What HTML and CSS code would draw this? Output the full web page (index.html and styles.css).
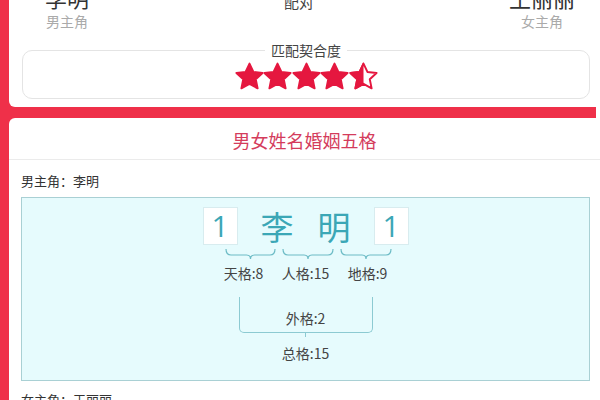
FILE: index.html
```html
<!DOCTYPE html>
<html lang="zh">
<head>
<meta charset="utf-8">
<link rel="stylesheet" href="styles.css">
</head>
<body>
<div class="frame">
  <div class="top-band">
    <div class="top">
      <div class="couple">
        <div class="who">
          <div class="name">李明</div>
          <div class="role">男主角</div>
        </div>
        <div class="pair">配对</div>
        <div class="who">
          <div class="name">王丽丽</div>
          <div class="role">女主角</div>
        </div>
      </div>
      <fieldset class="match">
        <legend>匹配契合度</legend>
        <div class="stars">
          <svg class="star" viewBox="2.2 2.2 19.6 19.6"><path d="M12 2.6l2.85 6.1 6.65.75-4.95 4.55 1.35 6.6L12 17.3l-5.9 3.3 1.35-6.6L2.5 9.45l6.65-.75z"/></svg>
          <svg class="star" viewBox="2.2 2.2 19.6 19.6"><path d="M12 2.6l2.85 6.1 6.65.75-4.95 4.55 1.35 6.6L12 17.3l-5.9 3.3 1.35-6.6L2.5 9.45l6.65-.75z"/></svg>
          <svg class="star" viewBox="2.2 2.2 19.6 19.6"><path d="M12 2.6l2.85 6.1 6.65.75-4.95 4.55 1.35 6.6L12 17.3l-5.9 3.3 1.35-6.6L2.5 9.45l6.65-.75z"/></svg>
          <svg class="star" viewBox="2.2 2.2 19.6 19.6"><path d="M12 2.6l2.85 6.1 6.65.75-4.95 4.55 1.35 6.6L12 17.3l-5.9 3.3 1.35-6.6L2.5 9.45l6.65-.75z"/></svg>
          <svg class="star half" viewBox="2.2 2.2 19.6 19.6">
            <defs><clipPath id="lefthalf"><rect x="0" y="0" width="12" height="24"/></clipPath></defs>
            <path class="outline" d="M12 2.6l2.85 6.1 6.65.75-4.95 4.55 1.35 6.6L12 17.3l-5.9 3.3 1.35-6.6L2.5 9.45l6.65-.75z"/>
            <path class="fillhalf" clip-path="url(#lefthalf)" d="M12 2.6l2.85 6.1 6.65.75-4.95 4.55 1.35 6.6L12 17.3l-5.9 3.3 1.35-6.6L2.5 9.45l6.65-.75z"/>
          </svg>
        </div>
      </fieldset>
    </div>
  </div>
  <div class="lower">
    <div class="card">
      <div class="title">男女姓名婚姻五格</div>
      <div class="person">男主角：李明</div>
      <div class="wuge">
        <div class="chars">
          <div class="cell num">1</div>
          <div class="cell">李</div>
          <div class="cell">明</div>
          <div class="cell num">1</div>
        </div>
        <svg class="braces" width="206" height="14" viewBox="0 0 206 14">
          <path d="M23 1Q23 7 28 7L43.5 7Q47.5 7 47.5 11Q47.5 7 51.5 7L67 7Q72 7 72 1"/>
          <path d="M80 1Q80 7 85 7L101 7Q105 7 105 11Q105 7 109 7L125 7Q130 7 130 1"/>
          <path d="M138 1Q138 7 143 7L159 7Q163 7 163 11Q163 7 167 7L183 7Q188 7 188 1"/>
        </svg>
        <div class="labels">
          <div class="lab">天格:8</div>
          <div class="lab">人格:15</div>
          <div class="lab">地格:9</div>
        </div>
        <div class="outer">外格:2</div>
        <div class="total">总格:15</div>
      </div>
      <div class="person second">女主角：王丽丽</div>
    </div>
  </div>
</div>
</body>
</html>
```
FILE: styles.css
```css
html, body {
  margin: 0;
  padding: 0;
  background: #fff;
  overflow: hidden;
}
body {
  font-family: "Noto Sans CJK SC", "Noto Sans", sans-serif;
  color: #333;
}
.frame {
  border-left: 9px solid #ef3049;
  min-height: 420px;
}
.top-band {
  width: 587px;
  background: #ef3049;
  padding-bottom: 11px;
}
.top {
  background: #fff;
  border-bottom-left-radius: 6px;
  padding: 0 6px 8px 13px;
  display: flex;
  flex-direction: column;
}
.couple {
  margin-top: -14px;
  display: flex;
  justify-content: space-between;
  padding: 0 15px 0 23px;
}
.who {
  text-align: center;
}
.name {
  font-size: 22px;
  line-height: 22px;
  color: #333;
}
.role {
  margin-top: 3px;
  font-size: 14px;
  line-height: 20px;
  color: #aaa;
}
.pair {
  margin-top: 5px;
  font-size: 15px;
  line-height: 22px;
  color: #444;
}
.match {
  margin: 10px 0 0 0;
  border: 1px solid #e4e4e4;
  border-radius: 10px;
  padding: 4px 0 8px;
  min-width: 0;
}
.match legend {
  margin: 0 auto;
  padding: 0 6px;
  font-size: 14px;
  line-height: 18px;
  color: #444;
}
.stars {
  display: flex;
  justify-content: center;
  gap: 1.5px;
}
.star {
  width: 27px;
  height: 27px;
  display: block;
  overflow: visible;
}
.star path {
  fill: #e5173f;
  stroke: #e5173f;
  stroke-width: 1.4;
  stroke-linejoin: round;
}
.star .outline {
  fill: none;
}
.lower {
  background: #ef3049;
}
.card {
  background: #fff;
  border-top-left-radius: 6px;
  overflow: hidden;
  padding-bottom: 20px;
}
.title {
  padding-top: 3px;
  line-height: 38px;
  font-size: 18px;
  text-align: center;
  color: #d43c5c;
  border-bottom: 1px solid #ebebeb;
}
.person {
  margin: 11px 0 0 12px;
  font-size: 13px;
  line-height: 20px;
  color: #333;
}
.person.second {
  margin-top: 9px;
}
.wuge {
  margin: 6px 10px 0 12px;
  border: 1px solid #a9d0d4;
  background: #e6fbfd;
  padding: 9px 0 17px;
  display: flex;
  flex-direction: column;
  align-items: center;
}
.chars {
  display: flex;
  gap: 22px;
}
.cell {
  width: 35px;
  height: 38px;
  box-sizing: border-box;
  display: flex;
  align-items: center;
  justify-content: center;
  font-size: 33px;
  line-height: 38px;
  color: #3ba7b6;
}
.num {
  background: #fff;
  border: 1px solid #d8ecef;
  font-family: "Open Sans", "Noto Sans", sans-serif;
  font-size: 30px;
}
.braces {
  display: block;
  margin-top: 3px;
}
.braces path {
  fill: none;
  stroke: #6dbcc6;
  stroke-width: 1.2;
}
.labels {
  display: flex;
  margin-top: 1px;
}
.lab {
  width: 62px;
  text-align: center;
  font-size: 14px;
  line-height: 20px;
  color: #444;
}
.outer {
  position: relative;
  width: 134px;
  height: 36px;
  box-sizing: border-box;
  margin-top: 14px;
  padding-top: 11px;
  border: 1.5px solid #8ccad2;
  border-top: none;
  border-radius: 0 0 5px 5px;
  text-align: center;
  font-size: 14px;
  line-height: 20px;
  color: #444;
}
.outer::after {
  content: "";
  position: absolute;
  left: 50%;
  bottom: -5px;
  width: 1.5px;
  height: 4px;
  margin-left: -1px;
  background: #8ccad2;
}
.total {
  margin-top: 10px;
  font-size: 14px;
  line-height: 20px;
  color: #444;
}
```
